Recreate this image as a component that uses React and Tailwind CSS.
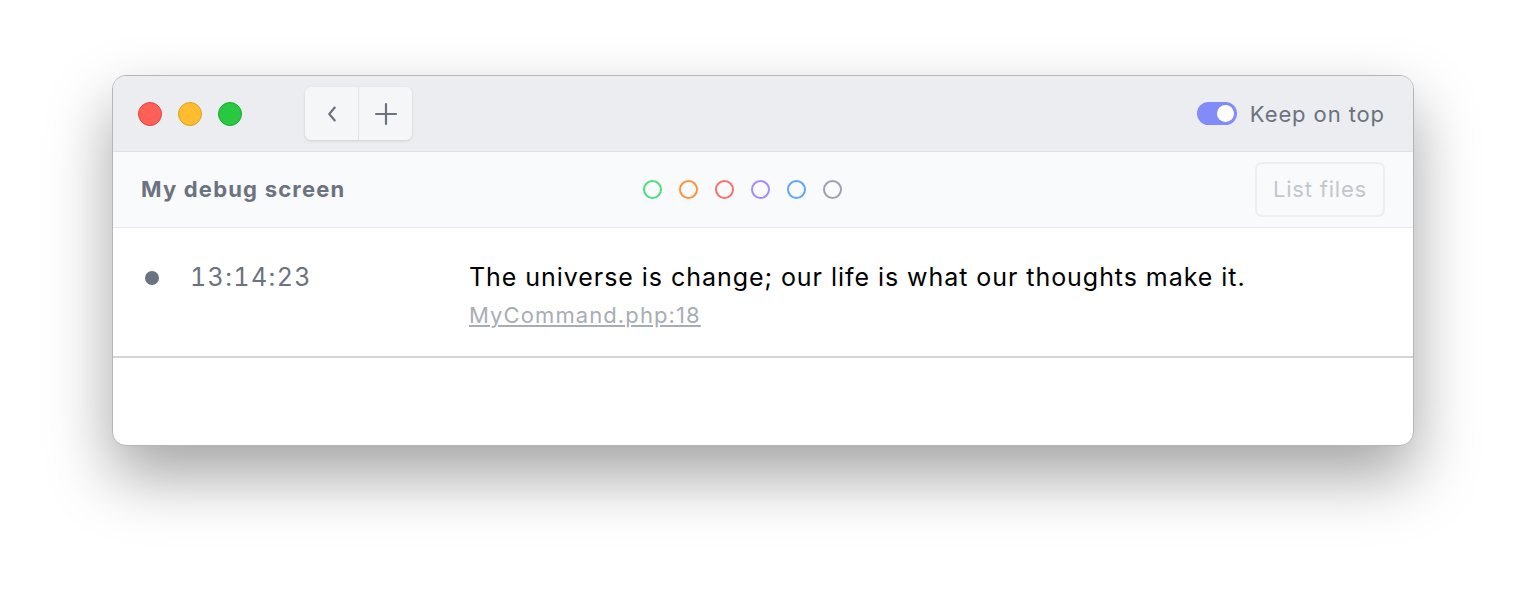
import React, { useState } from 'react';

const COLORS = ['#4ade80', '#fb923c', '#f87171', '#a78bfa', '#60a5fa', '#9ca3af'];

export default function App() {
  const [onTop, setOnTop] = useState(true);

  return (
    <div className="w-[1526px] h-[594px] bg-white pt-[75px] pl-[112px]" style={{ fontFamily: 'Inter, "Noto Sans", sans-serif' }}>
      <div className="w-[1302px] h-[371px] rounded-[14px] border border-[#b5b5b8] bg-white overflow-hidden flex flex-col shadow-[0_30px_64px_rgba(0,0,0,0.36)]">
        {/* Title bar */}
        <div className="h-[76px] bg-[#ecedf0] border-b border-[#e0e1e5] flex items-center px-[25px] shrink-0">
          <div className="flex gap-[16px]">
            <span className="w-[24px] h-[24px] rounded-full bg-[#fe5f57] border border-[#e0443e]" />
            <span className="w-[24px] h-[24px] rounded-full bg-[#febc2e] border border-[#dea123]" />
            <span className="w-[24px] h-[24px] rounded-full bg-[#28c840] border border-[#1aab29]" />
          </div>
          <div className="ml-[63px] flex h-[53px] rounded-[6px] bg-[#f5f6f8] shadow-[0_1px_3px_rgba(0,0,0,0.12)]">
            <button className="w-[54px] flex items-center justify-center border-r border-[#e2e3e6]">
              <svg width="22" height="22" viewBox="0 0 24 24" fill="none" stroke="#6b7280" strokeWidth="2.4" strokeLinecap="round" strokeLinejoin="round">
                <path d="M15 5l-6 7 6 7" />
              </svg>
            </button>
            <button className="w-[53px] flex items-center justify-center">
              <svg width="24" height="24" viewBox="0 0 24 24" fill="none" stroke="#6b7280" strokeWidth="2.2" strokeLinecap="round">
                <path d="M12 2v20M2 12h20" />
              </svg>
            </button>
          </div>
          <div className="ml-auto flex items-center gap-[13px] pr-[3px]">
            <button
              onClick={() => setOnTop(!onTop)}
              className={`w-[40px] h-[23px] rounded-full flex items-center px-[3px] ${onTop ? 'bg-[#818cf8] justify-end' : 'bg-gray-300 justify-start'}`}
            >
              <span className="w-[17px] h-[17px] rounded-full bg-white" />
            </button>
            <span className="text-[22px] text-[#6b7280] leading-none tracking-[0.9px]">Keep on top</span>
          </div>
        </div>

        {/* Header */}
        <div className="h-[76px] bg-[#f9fafb] border-b border-[#e5e7eb] flex items-center px-[28px] shrink-0">
          <div className="text-[22px] font-bold text-[#6b7280] w-[502px] tracking-[1.2px]">My debug screen</div>
          <div className="flex gap-[17px]">
            {COLORS.map((c) => (
              <span key={c} className="w-[19px] h-[19px] rounded-full border-2" style={{ borderColor: c }} />
            ))}
          </div>
          <button className="ml-auto h-[55px] px-[16px] rounded-[7px] border-2 border-[#eceef1] text-[22px] text-[#c3c7cd] tracking-[0.8px]">List files</button>
        </div>

        {/* Row */}
        <div className="h-[130px] border-b-2 border-[#d4d4d8] flex items-start pt-[31px] px-[32px] shrink-0">
          <span className="w-[14px] h-[14px] rounded-full bg-[#6b7280] mt-[12px]" />
          <span className="ml-[31px] w-[279px] text-[25px] text-[#6b7280] leading-[36px] tabular-nums tracking-[1.4px]">13:14:23</span>
          <div className="flex flex-col">
            <span className="text-[25px] text-black leading-[36px] tracking-[0.95px]">The universe is change; our life is what our thoughts make it.</span>
            <a className="text-[22px] text-[#a8adb5] underline leading-[30px] mt-[5px] tracking-[1.1px]">MyCommand.php:18</a>
          </div>
        </div>
        <div className="flex-1" />
      </div>
    </div>
  );
}
